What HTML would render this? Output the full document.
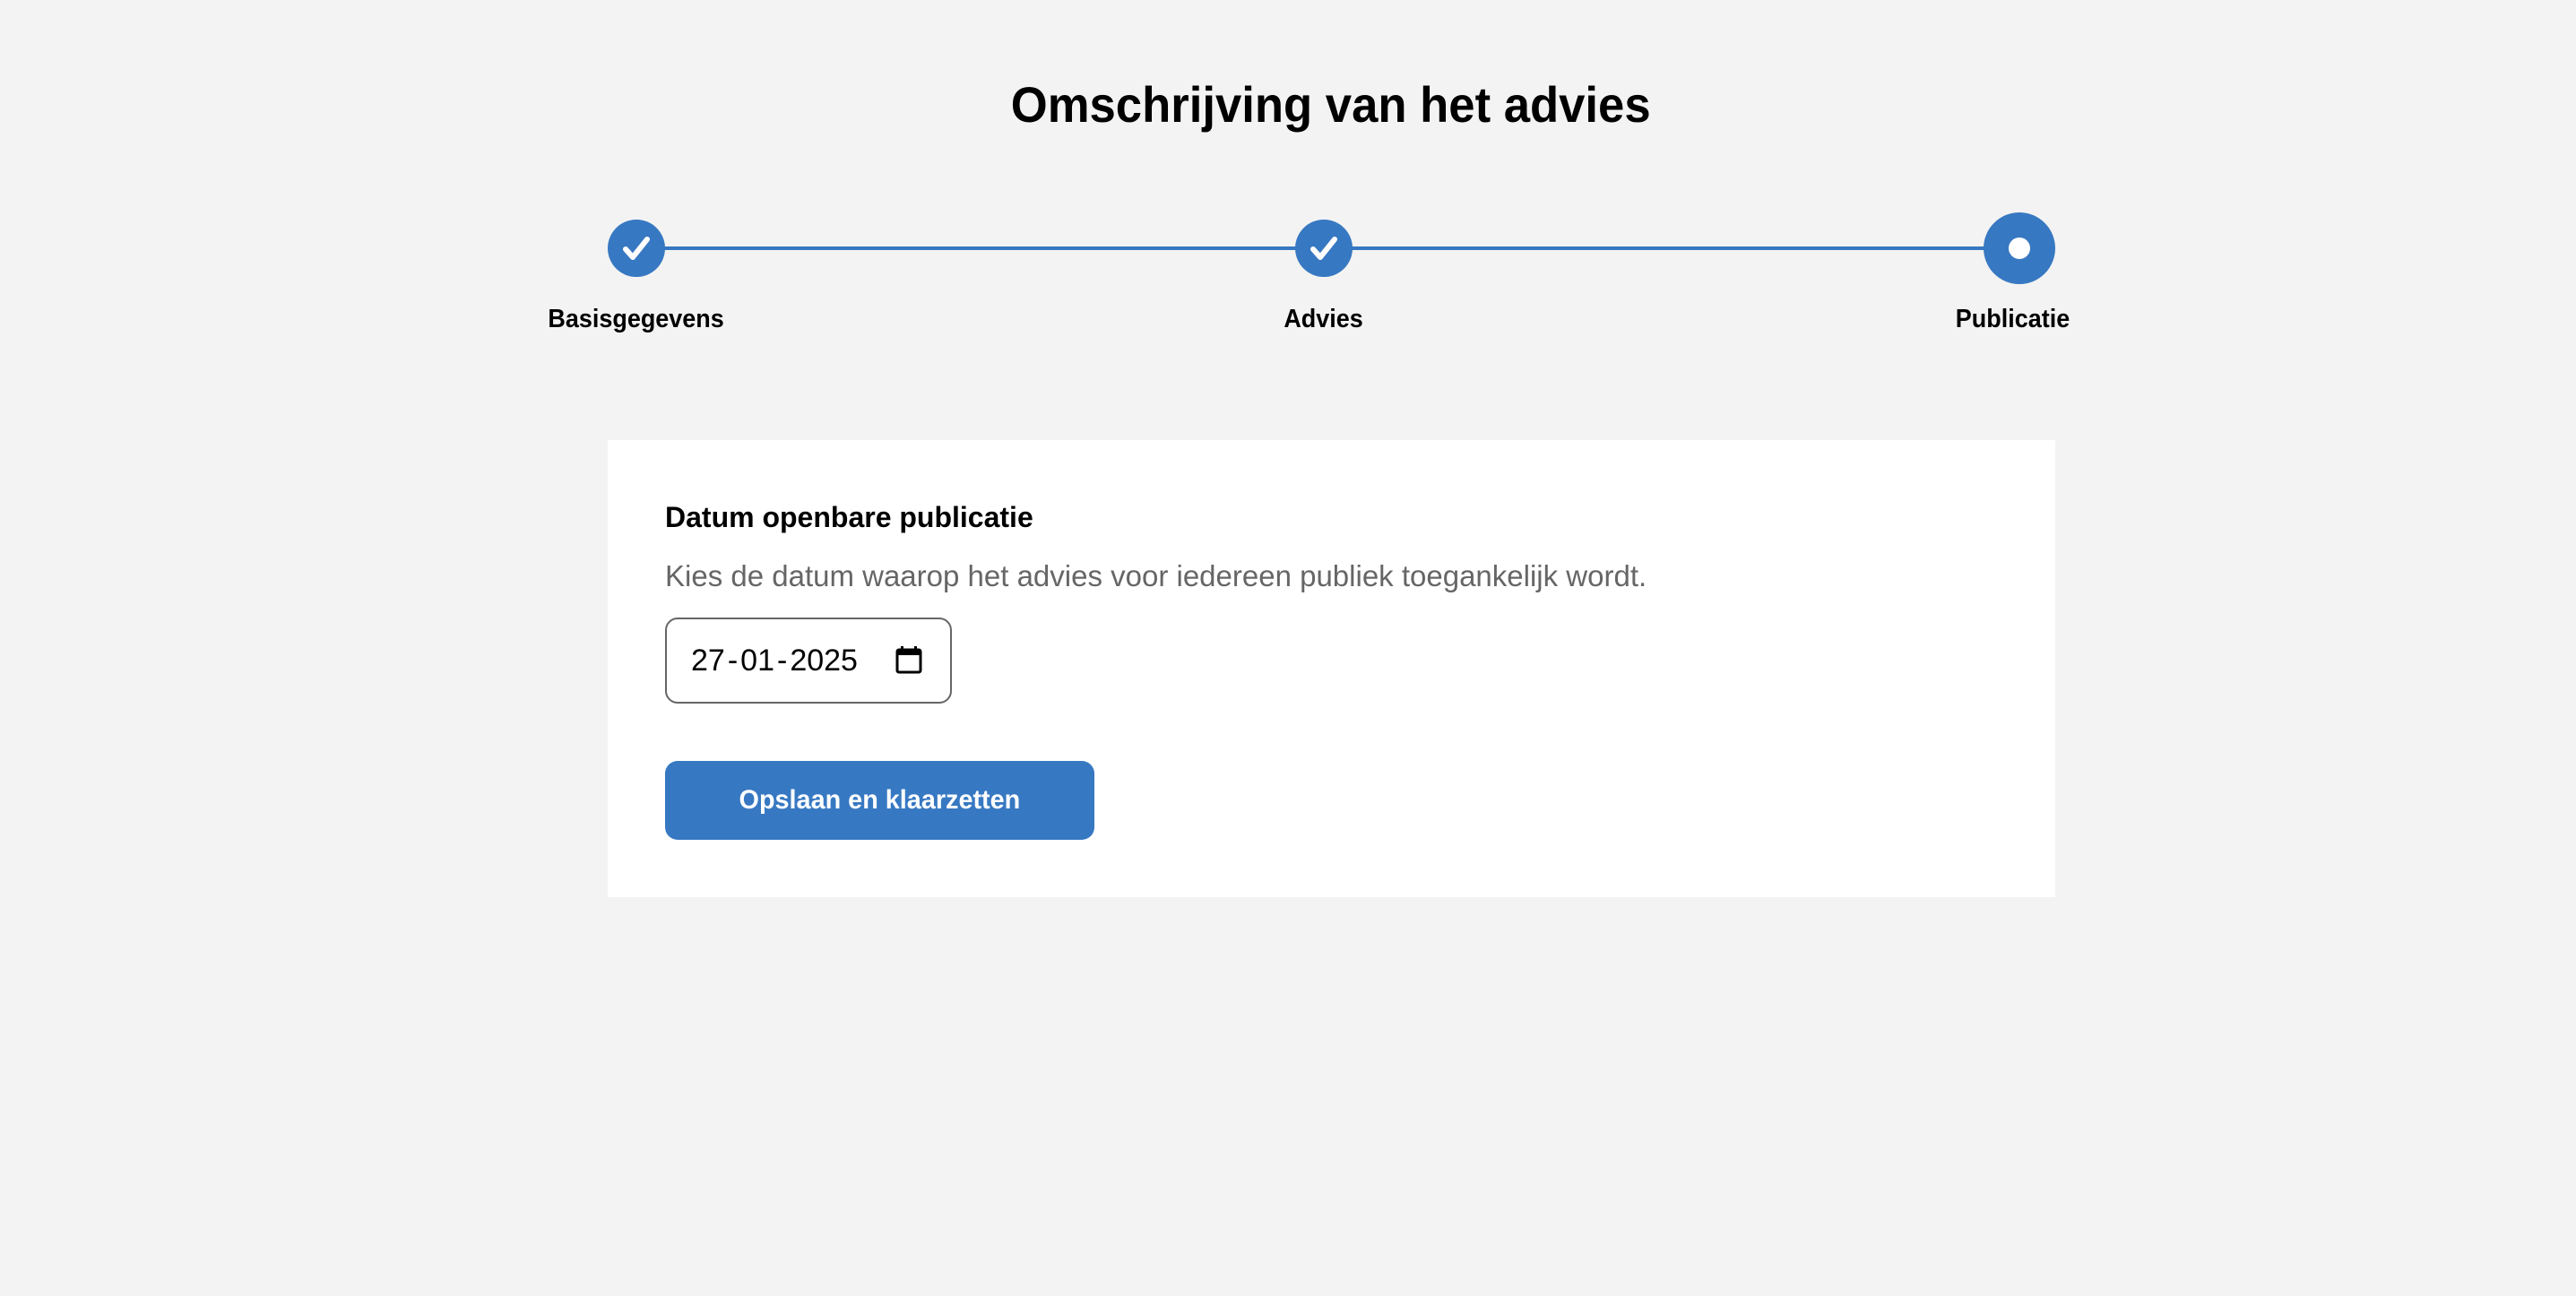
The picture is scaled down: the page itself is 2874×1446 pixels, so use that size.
<!DOCTYPE html>
<html><head><meta charset="utf-8"><style>
*{margin:0;padding:0;box-sizing:border-box}
html,body{width:2874px;height:1446px;background:#f3f3f3;font-family:"Liberation Sans",sans-serif;overflow:hidden;position:relative}
.abs{position:absolute}
.title{left:48px;width:2874px;top:84px;text-align:center;font-size:56px;font-weight:bold;color:#000;line-height:66px}
.title span{display:inline-block;transform:scaleX(0.94)}
.line{left:710px;top:275px;width:1543px;height:4px;background:#3778c2}
.c{background:#3778c2;border-radius:50%}
.lbl{font-size:29px;font-weight:bold;color:#000;text-align:center;width:400px;line-height:34px}
.lbl span{display:inline-block;transform:scaleX(0.93)}
.card{left:678px;top:491px;width:1615px;height:510px;background:#fff}
.sx{display:inline-block;white-space:nowrap}
</style></head><body>
<div class="abs title"><span>Omschrijving van het advies</span></div>
<div class="abs line"></div>
<div class="abs c" style="left:678px;top:245px;width:64px;height:64px"></div>
<div class="abs c" style="left:1445px;top:245px;width:64px;height:64px"></div>
<div class="abs c" style="left:2213px;top:237px;width:80px;height:80px"></div>
<svg class="abs" style="left:678px;top:245px" width="64" height="64" viewBox="0 0 64 64"><path d="M20 33 L28 42 L44 22" fill="none" stroke="#fff" stroke-width="6" stroke-linecap="round" stroke-linejoin="round"/></svg>
<svg class="abs" style="left:1445px;top:245px" width="64" height="64" viewBox="0 0 64 64"><path d="M20 33 L28 42 L44 22" fill="none" stroke="#fff" stroke-width="6" stroke-linecap="round" stroke-linejoin="round"/></svg>
<div class="abs" style="left:2241px;top:265px;width:24px;height:24px;border-radius:50%;background:#fff"></div>
<div class="abs lbl" style="left:510px;top:339px"><span>Basisgegevens</span></div>
<div class="abs lbl" style="left:1277px;top:339px"><span>Advies</span></div>
<div class="abs lbl" style="left:2045px;top:339px"><span>Publicatie</span></div>
<div class="abs card"></div>
<div class="abs" style="left:742px;top:558px;font-size:32px;font-weight:bold;color:#000;line-height:38px"><span class="sx">Datum openbare publicatie</span></div>
<div class="abs" style="left:742px;top:623px;font-size:33px;color:#666;line-height:40px"><span class="sx">Kies de datum waarop het advies voor iedereen publiek toegankelijk wordt.</span></div>
<div class="abs" style="left:742px;top:689px;width:320px;height:96px;border:2px solid #666;border-radius:14px;background:#fff"></div>
<div class="abs" style="left:771px;top:717px;font-size:34px;color:#000;line-height:40px;white-space:nowrap">27<span style="margin:0 3px">-</span>01<span style="margin:0 3px">-</span>2025</div>
<svg class="abs" style="left:998px;top:719px" width="32" height="34" viewBox="0 0 32 34"><rect x="3" y="6" width="26" height="25" rx="2" fill="none" stroke="#000" stroke-width="3"/><rect x="3" y="6" width="26" height="6" fill="#000"/><rect x="7" y="2" width="3" height="6" fill="#000"/><rect x="22" y="2" width="3" height="6" fill="#000"/></svg>
<div class="abs" style="left:742px;top:849px;width:479px;height:88px;background:#3778c2;border-radius:14px"></div>
<div class="abs" style="left:742px;top:874px;width:479px;text-align:center;font-size:30px;font-weight:bold;color:#fff;line-height:38px"><span style="display:inline-block;transform:scaleX(0.96)">Opslaan en klaarzetten</span></div>
</body></html>
